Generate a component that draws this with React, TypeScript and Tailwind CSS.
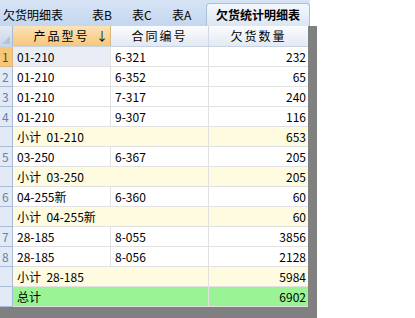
import React from 'react';

type Row = {
  no?: number;
  kind: 'item' | 'sub' | 'total';
  model?: string;
  contract?: string;
  label?: string;
  qty: number;
};

const ROWS: Row[] = [
  { no: 1, kind: 'item', model: '01-210', contract: '6-321', qty: 232 },
  { no: 2, kind: 'item', model: '01-210', contract: '6-352', qty: 65 },
  { no: 3, kind: 'item', model: '01-210', contract: '7-317', qty: 240 },
  { no: 4, kind: 'item', model: '01-210', contract: '9-307', qty: 116 },
  { kind: 'sub', label: '小计  01-210', qty: 653 },
  { no: 5, kind: 'item', model: '03-250', contract: '6-367', qty: 205 },
  { kind: 'sub', label: '小计  03-250', qty: 205 },
  { no: 6, kind: 'item', model: '04-255新', contract: '6-360', qty: 60 },
  { kind: 'sub', label: '小计  04-255新', qty: 60 },
  { no: 7, kind: 'item', model: '28-185', contract: '8-055', qty: 3856 },
  { no: 8, kind: 'item', model: '28-185', contract: '8-056', qty: 2128 },
  { kind: 'sub', label: '小计  28-185', qty: 5984 },
  { kind: 'total', label: '总计', qty: 6902 },
];

const TABS = [
  { t: '欠货明细表', w: 'w-[89px]' },
  { t: '表B', w: 'w-[40px]' },
  { t: '表C', w: 'w-[40px]' },
  { t: '表A', w: 'w-[37px]' },
];

export default function App() {
  return (
    <div
      className="w-[415px] h-[318px] bg-white text-[12px] text-black"
      style={{ fontFamily: '"Noto Sans CJK SC", "DejaVu Sans", sans-serif' }}
    >
      {/* Tab strip */}
      <div className="flex items-end h-[26px] w-[310px] bg-gradient-to-b from-[#d6e4f5] to-[#c4d7ef]">
        {TABS.map((t) => (
          <div
            key={t.t}
            className={t.w + ' shrink-0 h-[23px] flex items-center pl-[3px] whitespace-nowrap leading-none'}
          >
            {t.t}
          </div>
        ))}
        <div className="ml-auto shrink-0 h-[23px] w-[104px] flex items-center justify-center whitespace-nowrap rounded-t-[4px] border border-b-0 border-[#a9bfdc] bg-gradient-to-b from-[#f4f8fd] to-[#dbe6f4] font-bold leading-none">
          欠货统计明细表
        </div>
      </div>

      {/* Grid */}
      <div className="w-[317px] bg-[#808080] pr-[9px] pb-[11px]">
        <div className="w-[308px] bg-white">
          {/* Header */}
          <div className="flex h-[21px] border-b border-[#c7d2e2]">
            <div className="w-[13px] relative bg-gradient-to-b from-[#e3eaf4] to-[#c9d6e8] border-r border-[#a8bcd8]">
              <div className="absolute right-[2px] bottom-[2px] w-0 h-0 border-l-[8px] border-l-transparent border-b-[8px] border-b-[#b3c4dc]" />
            </div>
            <div className="w-[98px] flex items-center relative bg-gradient-to-b from-[#fbe3b8] to-[#f6c779] border-r border-[#dcb67a]">
              <span className="w-full text-center tracking-[2px] leading-none whitespace-nowrap">产品型号</span>
              <span className="absolute right-[2px] top-[4px] leading-none">↓</span>
            </div>
            <div className="w-[98px] flex items-center justify-center bg-gradient-to-b from-[#fbfcfe] to-[#e3e9f2] border-r border-[#cfd8e6] tracking-[2px] leading-none whitespace-nowrap">
              合同编号
            </div>
            <div className="flex-1 flex items-center justify-center bg-gradient-to-b from-[#fbfcfe] to-[#e3e9f2] tracking-[2px] leading-none whitespace-nowrap">
              欠货数量
            </div>
          </div>

          {/* Body */}
          {ROWS.map((r, i) => {
            const bg =
              r.kind === 'sub' ? 'bg-[#fefbe1]' : r.kind === 'total' ? 'bg-[#9af496]' : 'bg-white';
            const first = i === 0;
            return (
              <div key={i} className="flex h-[20px]">
                <div
                  className={
                    'w-[13px] border-r border-b flex items-center pl-[2px] leading-none ' +
                    (first
                      ? 'bg-[#f7c778] border-[#dcb67a] text-[#5c4a2a]'
                      : 'bg-[#e2eaf6] border-[#a8bcd8] text-[#6382ad]')
                  }
                >
                  {r.no ?? ''}
                </div>
                {r.kind === 'item' ? (
                  <>
                    <div
                      className={
                        'w-[98px] border-r border-b border-[#e1e1e1] flex items-center pl-[4px] leading-none ' +
                        (first ? 'bg-[#e9edf5]' : 'bg-white')
                      }
                    >
                      {r.model}
                    </div>
                    <div className="w-[98px] border-r border-b border-[#e1e1e1] flex items-center pl-[4px] leading-none">
                      {r.contract}
                    </div>
                  </>
                ) : (
                  <div
                    className={
                      'w-[196px] border-r border-b border-[#e1e1e1] flex items-center pl-[4px] leading-none whitespace-pre ' +
                      bg
                    }
                  >
                    {r.label}
                  </div>
                )}
                <div
                  className={
                    'flex-1 border-b border-[#e1e1e1] flex items-center justify-end pr-[2px] leading-none ' + bg
                  }
                >
                  {r.qty}
                </div>
              </div>
            );
          })}
        </div>
      </div>
    </div>
  );
}
